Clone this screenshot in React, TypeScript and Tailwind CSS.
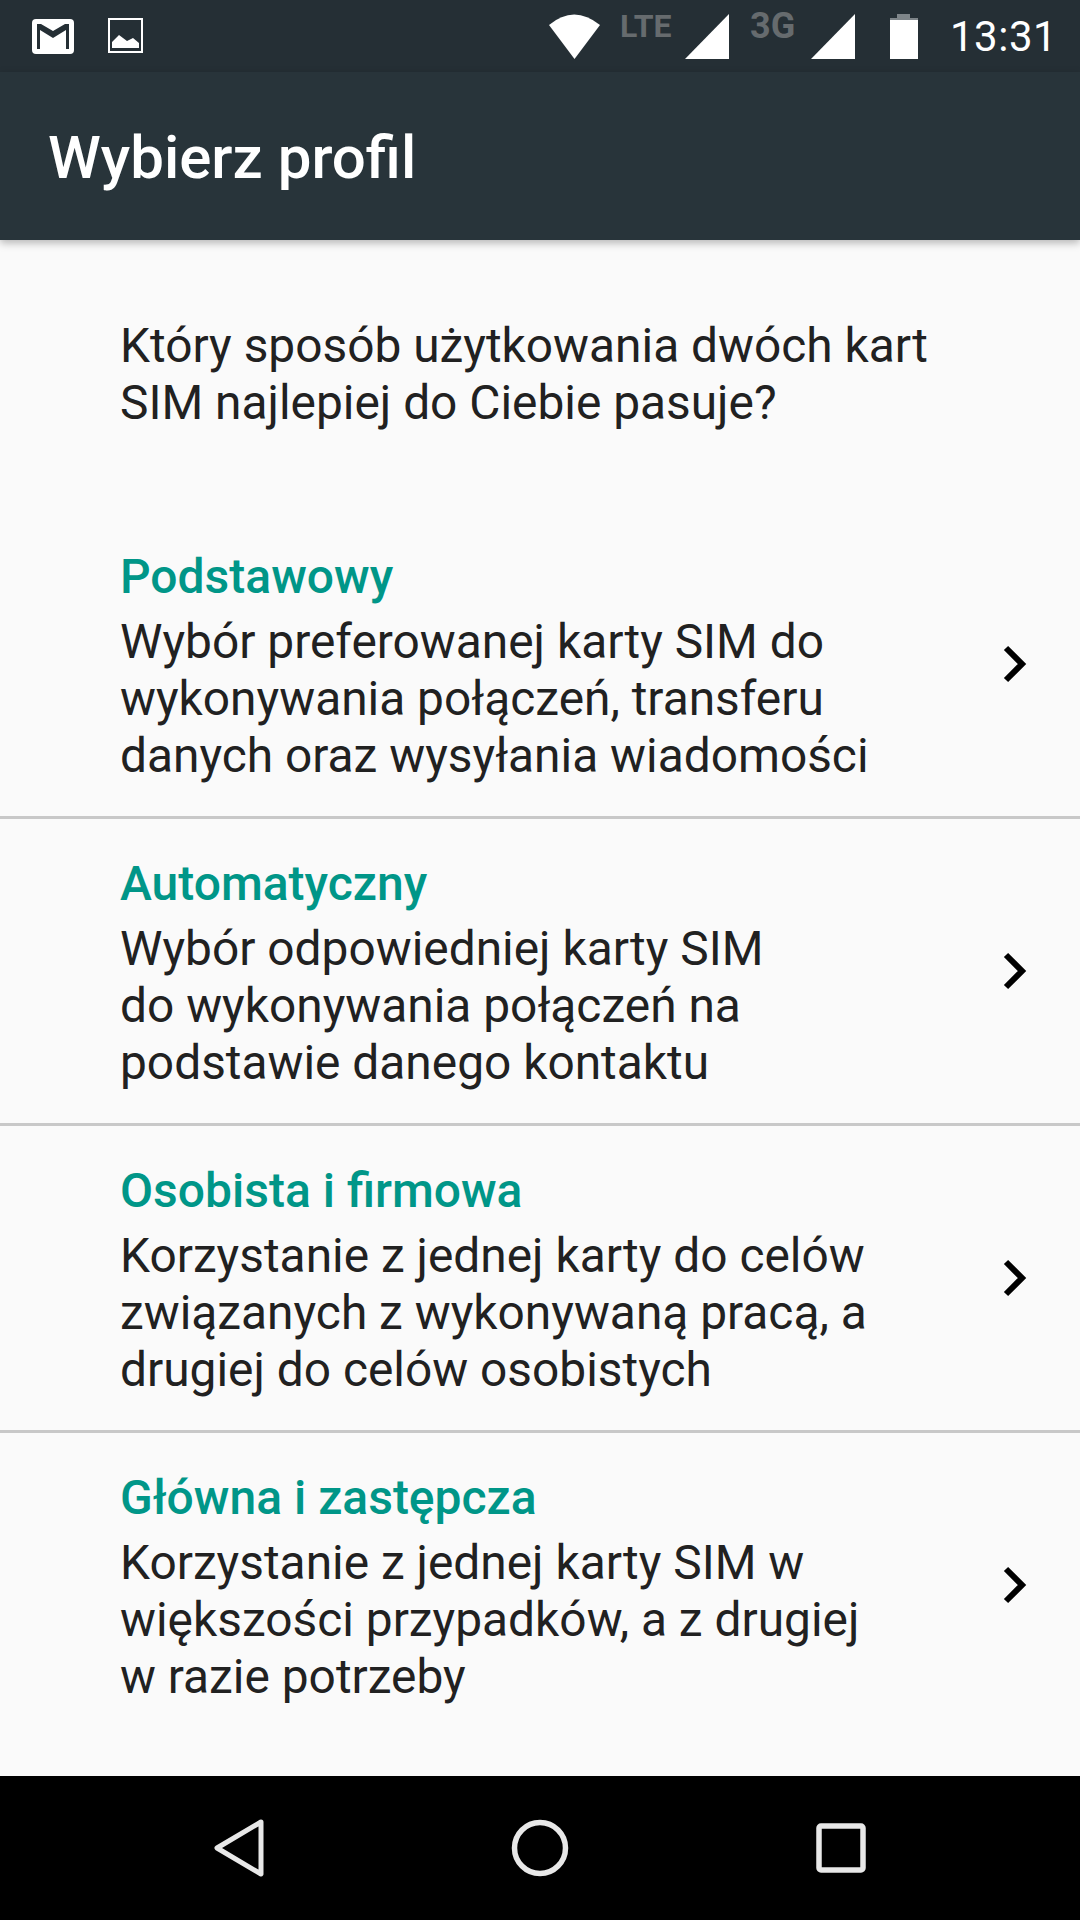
const rows = [
  { t: "Podstawowy", l: ["Wybór preferowanej karty SIM do", "wykonywania połączeń, transferu", "danych oraz wysyłania wiadomości"] },
  { t: "Automatyczny", l: ["Wybór odpowiedniej karty SIM", "do wykonywania połączeń na", "podstawie danego kontaktu"] },
  { t: "Osobista i firmowa", l: ["Korzystanie z jednej karty do celów", "związanych z wykonywaną pracą, a", "drugiej do celów osobistych"] },
  { t: "Główna i zastępcza", l: ["Korzystanie z jednej karty SIM w", "większości przypadków, a z drugiej", "w razie potrzeby"] },
];

function Signal() {
  return (
    <svg width="45" height="45" viewBox="0 0 45 45">
      <path d="M0 45 L44 0 V45 Z" fill="#fff" />
    </svg>
  );
}

export default function App() {
  return (
    <div className="w-[1080px] h-[1920px] flex flex-col bg-[#fafafa] overflow-hidden font-['Roboto',sans-serif]">
      <div className="h-[72px] bg-[#252f35] flex items-start text-white shrink-0">
        <svg className="ml-[32px] mt-[19px]" width="42" height="35" viewBox="0 0 42 35">
          <rect width="42" height="35" rx="4" fill="#fff" />
          <path d="M5 5 H9 L21 12 L33 5 H37 V30 H34 V11 L21 19 L8 11 V30 H5 Z" fill="#252f35" />
        </svg>
        <svg className="ml-[34px] mt-[18px]" width="36" height="36" viewBox="0 0 36 36">
          <rect x="1" y="1" width="33" height="33" fill="none" stroke="#fff" strokeWidth="2" />
          <path d="M4 30 V24 L11 17 L19 23 L25 20 L31 25 V30 Z" fill="#fff" />
        </svg>
        <svg className="ml-[404px] mt-[14px]" width="54" height="45" viewBox="0 0 54 45">
          <path d="M1 11 Q26 -10 52 11 L26.5 45 Z" fill="#fff" />
        </svg>
        <span className="ml-[18px] mt-[6px] w-[53px] text-[32px] leading-[40px] font-bold text-[#666b6e]">LTE</span>
        <div className="ml-[12px] mt-[14px]"><Signal /></div>
        <span className="ml-[20px] mt-[5px] w-[48px] text-[36px] leading-[42px] font-bold text-[#666b6e]">3G</span>
        <div className="ml-[13px] mt-[14px]"><Signal /></div>
        <svg className="ml-[33px] mt-[14px]" width="30" height="46" viewBox="0 0 30 46">
          <path d="M8 0 H21 V4 H29 V45 H1 V4 H8 Z" fill="#fff" />
          <path d="M8 0 H21 V4 H29 V6 H1 V4 H8 Z" fill="#7e8589" />
        </svg>
        <span className="ml-[31px] mt-[15px] text-[42px] leading-[44px] font-normal tracking-[0.5px]">13:31</span>
      </div>

      <div className="h-[168px] bg-[#28343a] flex items-center pl-[48px] shrink-0 shadow-[0_3px_8px_rgba(0,0,0,0.28)] relative">
        <h1 className="text-[60px] leading-[70px] font-medium text-white pt-[3px]">Wybierz profil</h1>
      </div>

      <div className="flex-1 flex flex-col">
        <p className="pl-[120px] pt-[78px] text-[47.85px] leading-[57px] text-[#212121] h-[272px]">
          Który sposób użytkowania dwóch kart<br />SIM najlepiej do Ciebie pasuje?
        </p>
        {rows.map((r, i) => (
          <div
            key={r.t}
            className={`h-[307px] shrink-0 pl-[120px] pr-[53px] flex items-start justify-between ${i < 3 ? "border-b-[3px] border-[#c8c8c8]" : ""}`}
          >
            <div className="pt-[36px]">
              <div className="text-[48px] leading-[58px] font-medium text-[#009688] mb-[8px]">{r.t}</div>
              {r.l.map((x) => (
                <div key={x} className="text-[47.85px] leading-[57px] text-[#212121]">{x}</div>
              ))}
            </div>
            <svg className="mt-[133px]" width="24" height="38" viewBox="0 0 24 38">
              <path d="M3 3 L19 19 L3 35" fill="none" stroke="#000" strokeWidth="6" />
            </svg>
          </div>
        ))}
      </div>

      <div className="h-[144px] bg-black flex items-center justify-center shrink-0 relative">
        <svg className="mr-[247px]" width="50" height="58" viewBox="0 0 50 58">
          <path d="M47 3 L3 29 L47 55 Z" fill="none" stroke="#e8e8e8" strokeWidth="5" strokeLinejoin="round" />
        </svg>
        <svg width="58" height="58" viewBox="0 0 58 58">
          <circle cx="29" cy="29" r="25.5" fill="none" stroke="#e8e8e8" strokeWidth="5.5" />
        </svg>
        <svg className="ml-[247px]" width="50" height="50" viewBox="0 0 50 50">
          <rect x="3" y="3" width="44" height="44" rx="2" fill="none" stroke="#e8e8e8" strokeWidth="5.5" />
        </svg>
      </div>
    </div>
  );
}
